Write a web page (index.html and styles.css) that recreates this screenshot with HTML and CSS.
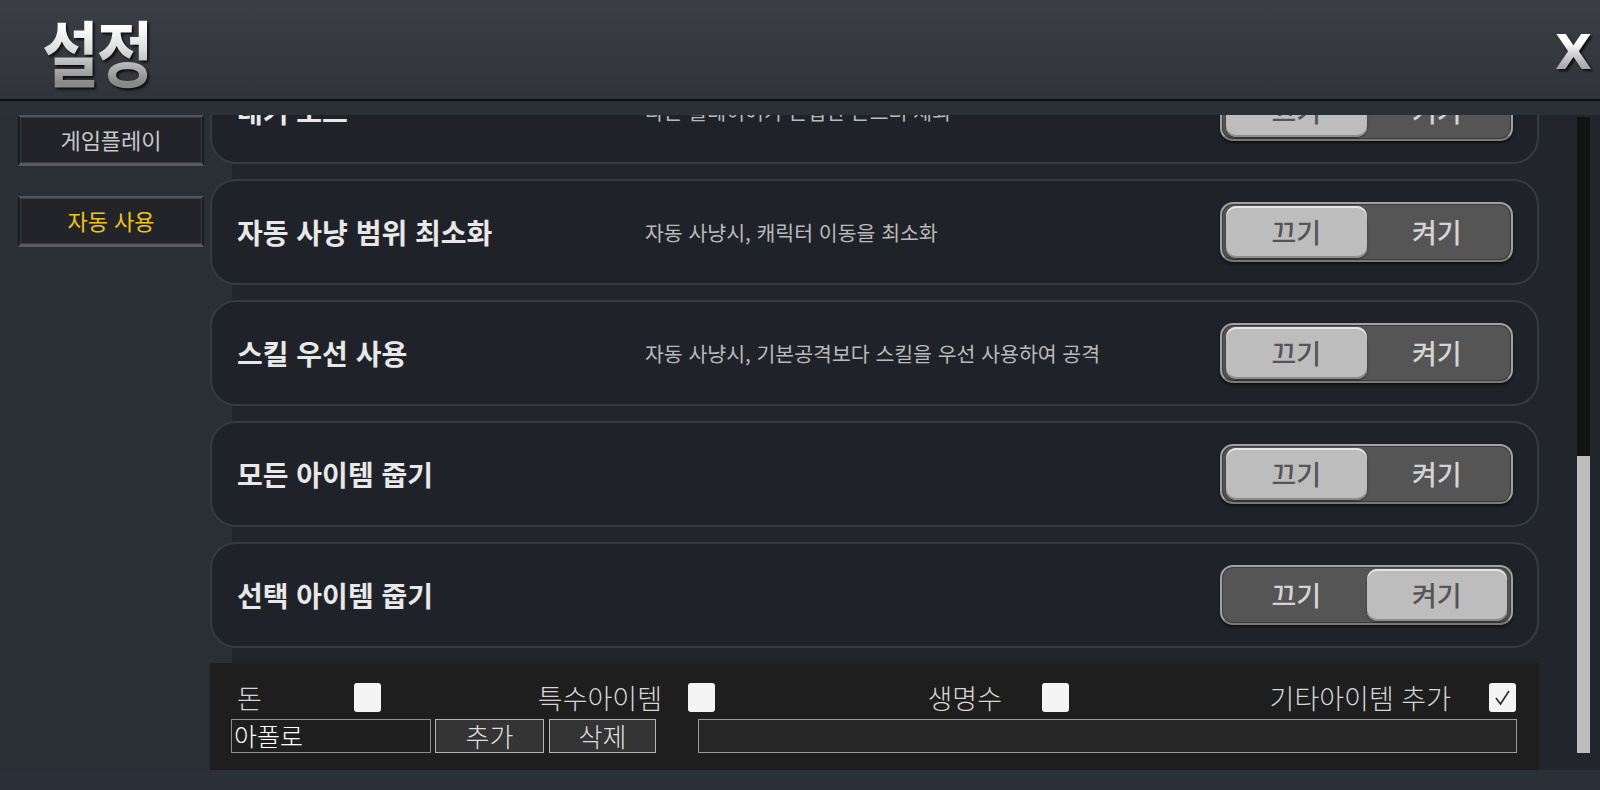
FILE: index.html
```html
<!DOCTYPE html>
<html lang="ko">
<head>
    <meta charset="UTF-8">
    <meta name="viewport" content="width=device-width, initial-scale=1.0">
    <title>설정</title>
    <link rel="stylesheet" href="styles.css">
</head>
<body>
    <div id="header">
        <h1 class="title">설정</h1>
        <div class="close">X</div>
    </div>
    <div id="under"></div>
    <div id="main">
        <!-- left tabs -->
        <div id="side">
            <div class="tab">게임플레이</div>
            <div class="tab on">자동 사용</div>
        </div>
        <!-- option list, scrolled to the bottom -->
        <div id="scroll">
            <div class="list">
                <div class="card">
                    <div class="name">대기 모드</div>
                    <div class="desc">다른 플레이어가 근접한 몬스터 제외</div>
                    <div class="toggle"><span class="on">끄기</span><span>켜기</span></div>
                </div>
                <div class="card">
                    <div class="name">자동 사냥 범위 최소화</div>
                    <div class="desc">자동 사냥시, 캐릭터 이동을 최소화</div>
                    <div class="toggle"><span class="on">끄기</span><span>켜기</span></div>
                </div>
                <div class="card">
                    <div class="name">스킬 우선 사용</div>
                    <div class="desc">자동 사냥시, 기본공격보다 스킬을 우선 사용하여 공격</div>
                    <div class="toggle"><span class="on">끄기</span><span>켜기</span></div>
                </div>
                <div class="card">
                    <div class="name">모든 아이템 줍기</div>
                    <div class="desc"></div>
                    <div class="toggle"><span class="on">끄기</span><span>켜기</span></div>
                </div>
                <div class="card">
                    <div class="name">선택 아이템 줍기</div>
                    <div class="desc"></div>
                    <div class="toggle"><span>끄기</span><span class="on">켜기</span></div>
                </div>

                <div id="items">
                    <div class="checks">
                        <div class="grp first"><span>돈</span><div class="cb"></div></div>
                        <div class="grp g2"><span>특수아이템</span><div class="cb"></div></div>
                        <div class="grp g3"><span>생명수</span><div class="cb"></div></div>
                        <div class="grp g4"><span>기타아이템 추가</span>
                            <div class="cb">
                                <svg width="27" height="29" viewBox="0 0 27 29"><polyline points="7,15 11.5,21 20,8" fill="none" stroke="#2b2b2b" stroke-width="1.6"/></svg>
                            </div>
                        </div>
                    </div>
                    <div class="inputs">
                        <div class="field">아폴로</div>
                        <div class="btn">추가</div>
                        <div class="btn b2">삭제</div>
                        <div class="field big"></div>
                    </div>
                </div>
            </div>
        </div>
        <div class="bar"><div class="thumb"></div></div>
    </div>
    <div id="foot"></div>
</body>
</html>
```

FILE: styles.css
```css
body {
    margin: 0;
    padding: 0;
    width: 1600px;
    height: 790px;
    overflow: hidden;
    background-color: #2a2e35;
    font-family: "Noto Sans CJK KR", "Noto Sans", sans-serif;
    color: #e6e6e6;
}

/* top bar */
#header {
    height: 99px;
    border-bottom: 2px solid #0e0f11;
    background: linear-gradient(to bottom, #3b3e45 0%, #30333a 100%);
    display: flex;
    justify-content: space-between;
    align-items: center;
    padding: 0 8px 0 42px;
}
.title {
    margin: 0;
    font-size: 72px;
    font-weight: 700;
    line-height: 99px;
    letter-spacing: -3px;
    transform: scaleX(0.86);
    transform-origin: left center;
    background: linear-gradient(to bottom, #ffffff 26px, #dcdcdc 50px, #8a8a8a 82px);
    -webkit-background-clip: text;
    background-clip: text;
    color: transparent;
    filter: drop-shadow(2px 2px 1px #0c0d0f);
}
.close {
    font-family: "DejaVu Sans", sans-serif;
    font-size: 48px;
    font-weight: 700;
    line-height: 1;
    margin-top: 4px;
    background: linear-gradient(to bottom, #ffffff 30%, #c9c9c9 60%, #8e8e8e 100%);
    -webkit-background-clip: text;
    background-clip: text;
    color: transparent;
    filter: drop-shadow(2px 2px 1px #0c0d0f);
}
#under {
    height: 14px;
    background-color: #2b2f36;
}

#main {
    display: flex;
    height: 655px;
    background-color: #22262c;
}

/* left tabs */
#side {
    width: 192px;
    padding-left: 18px;
    background-color: #2a2e35;
}
.tab {
    box-sizing: border-box;
    width: 186px;
    height: 51px;
    margin-bottom: 30px;
    background-color: #222429;
    border: 2px solid #181a1d;
    border-top-color: #50545c;
    border-bottom: 3px solid #565a62;
    box-shadow: inset 0 0 0 1px #393c43;
    text-align: center;
    line-height: 45px;
    font-size: 22px;
    color: #c8c8c8;
}
.tab.on {
    color: #f0c41c;
}

/* scroll area */
#scroll {
    width: 1329px;
    overflow: hidden;
    background: linear-gradient(to right, #2a2e35 22px, #22262c 22px);
}
.list {
    margin-top: -57px;
}
.card {
    box-sizing: border-box;
    height: 106px;
    margin-bottom: 15px;
    display: flex;
    align-items: center;
    padding: 0 24px 0 25px;
    background-color: #1f2329;
    border: 2px solid #363a42;
    border-radius: 26px;
}
.name {
    width: 408px;
    font-size: 28px;
    font-weight: 700;
    color: #e8e8e8;
}
.desc {
    flex: 1;
    font-size: 20.5px;
    color: #b9b9b9;
}

/* on/off switch */
.toggle {
    box-sizing: border-box;
    width: 293px;
    height: 60px;
    padding: 2px 4px;
    display: flex;
    background-color: #555555;
    border: 2px solid #a2a2a2;
    border-bottom-color: #7a7a7a;
    border-radius: 13px;
    box-shadow: inset 0 0 0 1px #3b3b3b, 0 2px 3px rgba(0, 0, 0, 0.6);
}
.toggle span {
    flex: 1;
    text-align: center;
    font-size: 27px;
    font-weight: 500;
    line-height: 52px;
    color: #d4d4d4;
    border-radius: 10px;
}
.toggle span.on {
    background-color: #bdbdbd;
    color: #555555;
    box-shadow: inset 0 2px 0 #e6e6e6, inset 0 -2px 0 #8c8c8c, 0 1px 2px rgba(0, 0, 0, 0.5);
}

/* item filter panel */
#items {
    box-sizing: border-box;
    height: 107px;
    padding: 20px 22px 0 21px;
    background-color: #1e1e1e;
}
.checks {
    display: grid;
    grid-template-columns: 144px 334px 354px 447px;
    padding-left: 6px;
    height: 29px;
    margin-bottom: 7px;
}
.grp {
    display: flex;
    align-items: center;
    justify-content: flex-end;
    font-size: 27px;
    font-weight: 300;
    line-height: 29px;
    color: #d6d6d6;
}
.grp.first { justify-content: space-between; }
.g2 { gap: 26px; }
.g3 { gap: 40px; }
.g4 { gap: 38px; }
.cb {
    width: 27px;
    height: 29px;
    background-color: #f4f4f4;
    border-radius: 3px;
}
.cb svg { display: block; }

.inputs {
    display: flex;
    height: 34px;
}
.field {
    box-sizing: border-box;
    width: 200px;
    height: 34px;
    padding-left: 2px;
    background-color: #1f1f1f;
    border: 1px solid #8f8f8f;
    font-size: 25px;
    font-weight: 300;
    line-height: 30px;
    color: #ffffff;
}
.btn {
    box-sizing: border-box;
    width: 109px;
    margin-left: 4px;
    background-color: #343434;
    border: 1px solid #b4b4b4;
    text-align: center;
    font-size: 26px;
    font-weight: 300;
    line-height: 32px;
    color: #dedede;
}
.btn.b2 {
    width: 107px;
    margin-left: 5px;
}
.field.big {
    width: 819px;
    margin-left: 42px;
    background-color: #262626;
    border-color: #9a9a9a;
}

/* scrollbar */
.bar {
    width: 13px;
    margin: 2px 0 17px 38px;
    background-color: #111315;
    display: flex;
    flex-direction: column;
}
.thumb {
    margin-top: auto;
    height: 297px;
    background-color: #bdbdbd;
}

#foot {
    height: 20px;
    background-color: #2b2f37;
}
```
